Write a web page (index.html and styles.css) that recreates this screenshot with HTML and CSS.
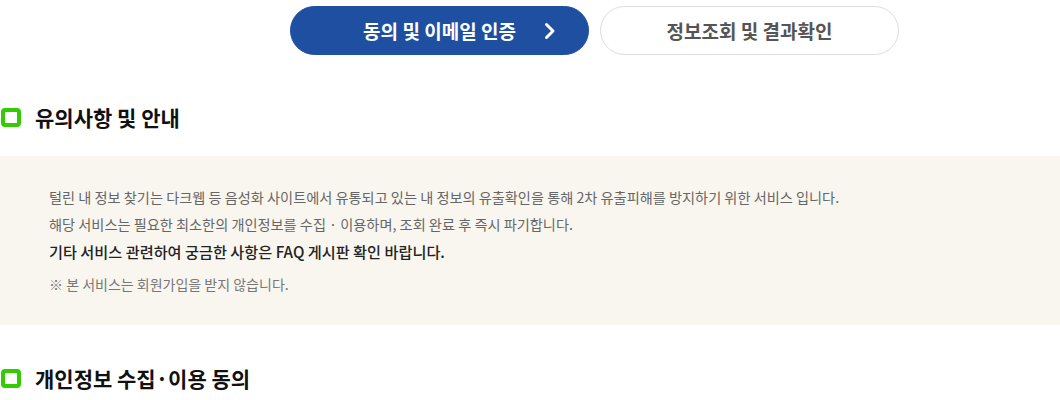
FILE: index.html
```html
<html>
  <head>
    <title>털린 내 정보 찾기</title>
    <meta charset="utf-8" />
    <link rel="stylesheet" href="styles.css">
  </head>
  <body>
    <!-- 단계 탭 -->
    <div class="step_list">
      <a class="step step_on" href="#">
        <span class="step_txt">동의 및 이메일 인증</span>
        <svg class="step_arrow" width="12" height="18" viewBox="0 0 12 18">
          <path d="M2.5 2.5 L9 9 L2.5 15.5" fill="none" stroke="#fff" stroke-width="3" stroke-linecap="round" stroke-linejoin="round" />
        </svg>
      </a>
      <a class="step" href="#">
        <span class="step_txt">정보조회 및 결과확인</span>
      </a>
    </div>

    <h3 class="tit">유의사항 및 안내</h3>
    <div class="info_box">
      <p>털린 내 정보 찾기는 다크웹 등 음성화 사이트에서 유통되고 있는 내 정보의 유출확인을 통해 2차 유출피해를 방지하기 위한 서비스 입니다.</p>
      <p>해당 서비스는 필요한 최소한의 개인정보를 수집 · 이용하며, 조회 완료 후 즉시 파기합니다.</p>
      <p class="strong">기타 서비스 관련하여 궁금한 사항은 FAQ 게시판 확인 바랍니다.</p>
      <p class="note">※ 본 서비스는 회원가입을 받지 않습니다.</p>
    </div>

    <h3 class="tit">개인정보 수집·이용 동의</h3>
  </body>
</html>
```

FILE: styles.css
```css
html, body {
  margin: 0px;
  background-color: #fff;
  font-family: "Noto Sans CJK KR", "Noto Sans", sans-serif;
}

.step_list {
  display: flex;
  gap: 11px;
  padding: 6px 0 0 290px;
}

.step {
  display: flex;
  align-items: center;
  justify-content: center;
  box-sizing: border-box;
  width: 299px;
  height: 49px;
  border: 1px solid #ddd;
  border-radius: 25px;
  background-color: #fff;
  color: #555;
  font-size: 19px;
  font-weight: bold;
  text-decoration: none;
}

.step_on {
  position: relative;
  border-color: #1f4fa0;
  background-color: #1f4fa0;
  color: #fff;
}

.step_arrow {
  position: absolute;
  right: 32px;
  top: 15px;
}

.tit {
  display: flex;
  align-items: center;
  gap: 14px;
  margin: 0;
  padding: 0 0 0 1px;
  height: 24px;
  font-size: 21px;
  font-weight: bold;
  color: #111;
}

.tit::before {
  content: "";
  box-sizing: border-box;
  width: 20px;
  height: 19px;
  border: 4px solid #33cc00;
  border-radius: 4px;
}

.step_list + .tit {
  margin-top: 50px;
}

.info_box {
  margin: 27px 0 41px;
  padding: 28px 49px 27px;
  background-color: #f9f6f0;
}

.info_box p {
  margin: 0;
  font-size: 14.2px;
  line-height: 27px;
  color: #666;
}

.info_box .strong {
  font-size: 15.2px;
  font-weight: 500;
  color: #222;
}

.info_box .note {
  margin-top: 6px;
  font-size: 14px;
  color: #777;
}
```
